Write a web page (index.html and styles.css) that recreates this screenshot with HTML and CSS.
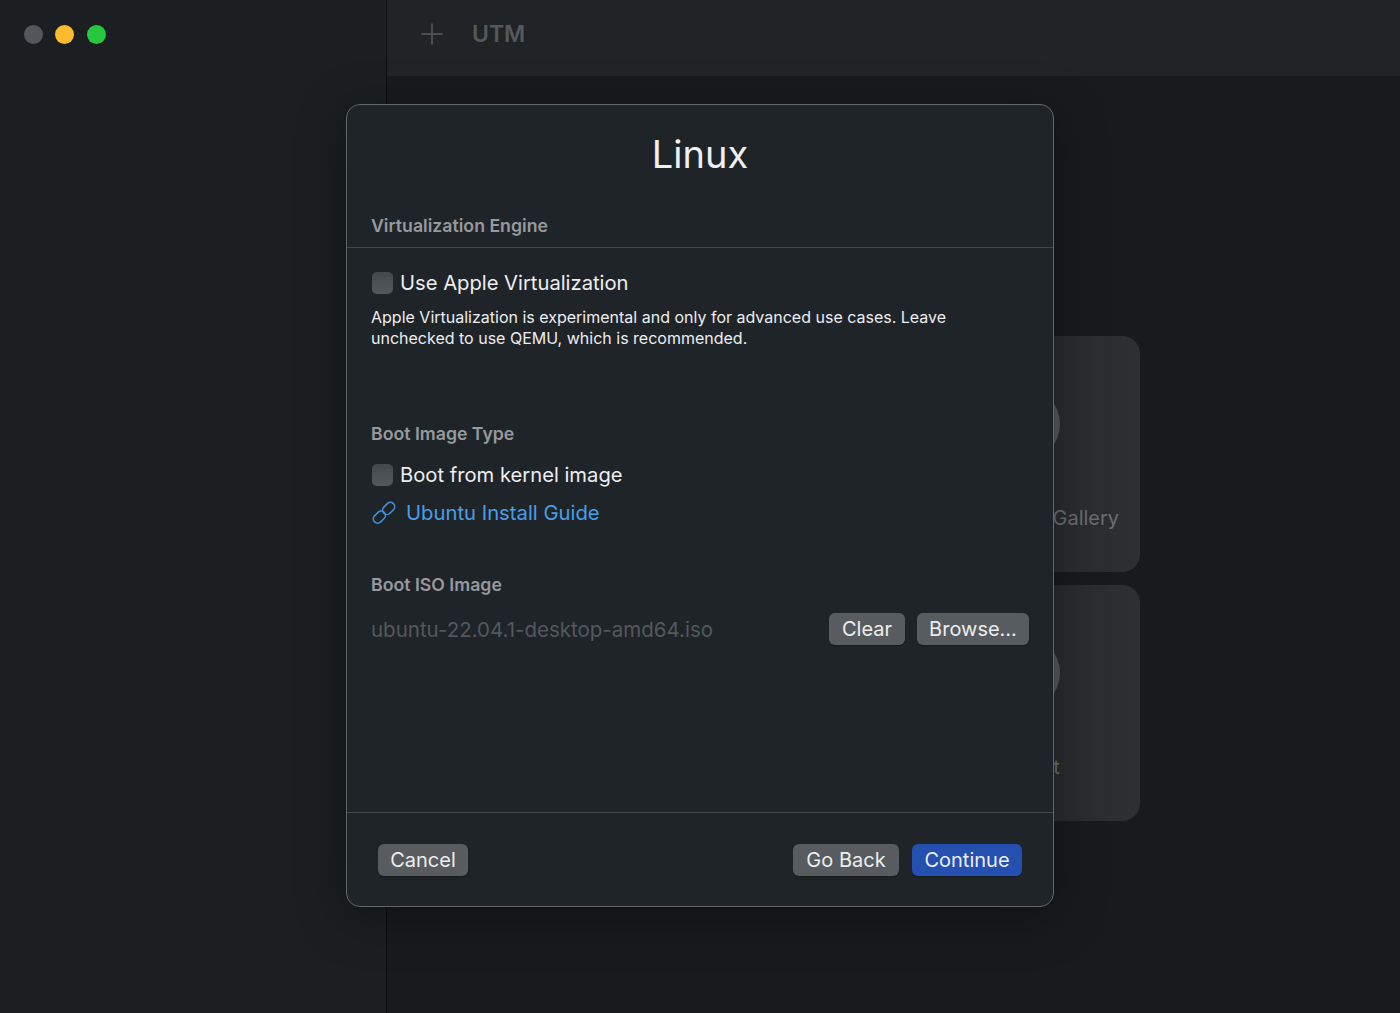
FILE: index.html
```html
<!DOCTYPE html>
<html>
<head>
    <title>UTM</title>
    <link rel="stylesheet" href="styles.css">
</head>
<body>
    <div class="window">
        <!-- Sidebar -->
        <div class="sidebar">
            <div class="traffic-lights">
                <span class="light light-grey"></span>
                <span class="light light-yellow"></span>
                <span class="light light-green"></span>
            </div>
        </div>

        <!-- Main area behind the sheet -->
        <div class="main">
            <div class="toolbar">
                <svg class="plus-icon" width="24" height="24" viewBox="0 0 24 24">
                    <path d="M12 1.5V22.5M1.5 12H22.5" stroke="#4b4f52" stroke-width="2" fill="none"/>
                </svg>
                <span class="toolbar-title">UTM</span>
            </div>
            <div class="card-grid">
                <div class="card">
                    <span class="card-circle"></span>
                    <span class="card-label">Create a New Virtual Machine</span>
                </div>
                <div class="card">
                    <span class="card-circle"></span>
                    <span class="card-label">Browse UTM Gallery</span>
                </div>
                <div class="card">
                    <span class="card-circle"></span>
                    <span class="card-label">User Guide</span>
                </div>
                <div class="card">
                    <span class="card-circle"></span>
                    <span class="card-label">Support</span>
                </div>
            </div>
        </div>

        <!-- Wizard sheet -->
        <div class="sheet">
            <h1 class="sheet-title">Linux</h1>

            <div class="section-head section-head-line">Virtualization Engine</div>
            <div class="sheet-body">
                <label class="check-row">
                    <span class="checkbox"></span>
                    <span>Use Apple Virtualization</span>
                </label>
                <p class="note">Apple Virtualization is experimental and only for advanced use cases. Leave unchecked to use QEMU, which is recommended.</p>

                <div class="section-head boot-type-head">Boot Image Type</div>
                <label class="check-row kernel-row">
                    <span class="checkbox"></span>
                    <span>Boot from kernel image</span>
                </label>
                <a class="guide-link" href="#">
                    <svg width="24" height="24" viewBox="0 0 24 24" fill="none" stroke="#3f90d8" stroke-width="1.6">
                        <rect x="9.5" y="0.5" width="13.5" height="8.6" rx="4.3" transform="rotate(-45 16.2 4.8) translate(-1.6 2.2)"/>
                        <rect x="1" y="14.5" width="13.5" height="8.6" rx="4.3" transform="rotate(-45 7.8 18.8) translate(1.6 -2.2)"/>
                    </svg>
                    <span>Ubuntu Install Guide</span>
                </a>

                <div class="section-head iso-head">Boot ISO Image</div>
                <div class="iso-row">
                    <span class="iso-name">ubuntu-22.04.1-desktop-amd64.iso</span>
                    <button class="btn btn-clear">Clear</button>
                    <button class="btn btn-browse">Browse...</button>
                </div>
            </div>

            <div class="sheet-footer">
                <button class="btn btn-cancel">Cancel</button>
                <button class="btn btn-back">Go Back</button>
                <button class="btn btn-primary">Continue</button>
            </div>
        </div>
    </div>
</body>
</html>
```

FILE: styles.css
```css
html, body {
    margin: 0;
    height: 100%;
    background-color: #181b1d;
    overflow: hidden;
}

body {
    font-family: "Inter", "Liberation Sans", sans-serif;
}

.window {
    position: relative;
    display: flex;
    width: 1400px;
    height: 1013px;
}

/* Sidebar */
.sidebar {
    width: 386px;
    border-right: 1px solid #0c0e0f;
    background-color: #1b1f21;
}

.traffic-lights {
    display: flex;
    gap: 12.5px;
    padding: 25px 0 0 23.5px;
}

.light {
    width: 19px;
    height: 19px;
    border-radius: 50%;
}

.light-grey {
    background-color: #53575c;
}

.light-yellow {
    background-color: #febb2e;
}

.light-green {
    background-color: #27c840;
}

/* Main area */
.main {
    flex: 1;
    display: flex;
    flex-direction: column;
    background-color: #181b1d;
}

.toolbar {
    display: flex;
    align-items: center;
    height: 76px;
    padding: 0 0 8px 33px;
    box-sizing: border-box;
    background-color: #202427;
}

.plus-icon {
    margin-right: 28px;
}

.toolbar-title {
    color: #55595c;
    font-size: 23px;
    font-weight: 600;
}

.card-grid {
    display: grid;
    grid-template-columns: 236px 236px;
    grid-auto-rows: 236px;
    gap: 13px;
    justify-content: end;
    margin: 260px 260px 0 0;
}

.card {
    display: flex;
    flex-direction: column;
    align-items: center;
    border-radius: 18px;
    background: linear-gradient(90deg, #232628, #2e2f30);
}

.card-circle {
    width: 76px;
    height: 76px;
    margin-top: 50px;
    border-radius: 50%;
    background-color: #55585a;
}

.card-label {
    margin-top: 44px;
    color: #6b6e70;
    font-size: 20px;
    white-space: nowrap;
}

/* Wizard sheet */
.sheet {
    position: absolute;
    left: 346px;
    top: 104px;
    display: flex;
    flex-direction: column;
    width: 708px;
    height: 803px;
    box-sizing: border-box;
    border: 1px solid #63676a;
    border-radius: 14px;
    background-color: #1f2429;
    box-shadow: 0 10px 50px rgba(0, 0, 0, 0.35);
}

.sheet-title {
    margin: 0;
    padding-top: 23px;
    color: #eef0f1;
    font-size: 38px;
    font-weight: 400;
    line-height: 52px;
    text-align: center;
}

.section-head {
    color: #969a9e;
    font-size: 17.7px;
    font-weight: 600;
    line-height: 22px;
}

.section-head-line {
    margin-top: 35px;
    padding: 0 24px 10px;
    border-bottom: 1px solid #43474a;
}

.sheet-body {
    flex: 1;
    padding: 23px 24px 0;
}

.check-row {
    display: flex;
    align-items: center;
    gap: 7px;
    padding-left: 1px;
    color: #eceef0;
    font-size: 20.2px;
    line-height: 24px;
}

.checkbox {
    width: 21px;
    height: 22px;
    border-radius: 5px;
    background: linear-gradient(#45494d, #55585b);
}

.note {
    margin: 12px 0 0;
    color: #eceef0;
    font-size: 16px;
    line-height: 21px;
}

.boot-type-head {
    margin-top: 74px;
}

.kernel-row {
    margin-top: 18px;
}

.guide-link {
    display: flex;
    align-items: center;
    gap: 10px;
    margin-top: 13px;
    padding-left: 1px;
    color: #4a9ee6;
    font-size: 20.25px;
    line-height: 26px;
    text-decoration: none;
}

.iso-head {
    margin-top: 48px;
}

.iso-row {
    display: flex;
    align-items: center;
    margin-top: 17px;
}

.iso-name {
    flex: 1;
    color: #54585c;
    font-size: 20.5px;
}

/* Buttons */
.btn {
    height: 32px;
    padding: 0;
    border: none;
    border-radius: 6px;
    background-color: #585c5f;
    color: #eceef0;
    font-family: inherit;
    font-size: 20px;
    box-shadow: 0 1px 1px rgba(0, 0, 0, 0.3);
}

.btn-clear {
    width: 76px;
}

.btn-browse {
    width: 112px;
    margin-left: 12px;
}

.sheet-footer {
    display: flex;
    align-items: center;
    height: 94px;
    box-sizing: border-box;
    padding: 1px 31px 0 31px;
    border-top: 1px solid #43474a;
}

.btn-cancel {
    width: 90px;
    margin-right: auto;
}

.btn-back {
    width: 106px;
}

.btn-primary {
    width: 110px;
    margin-left: 13px;
    background-color: #2550b0;
}
```
